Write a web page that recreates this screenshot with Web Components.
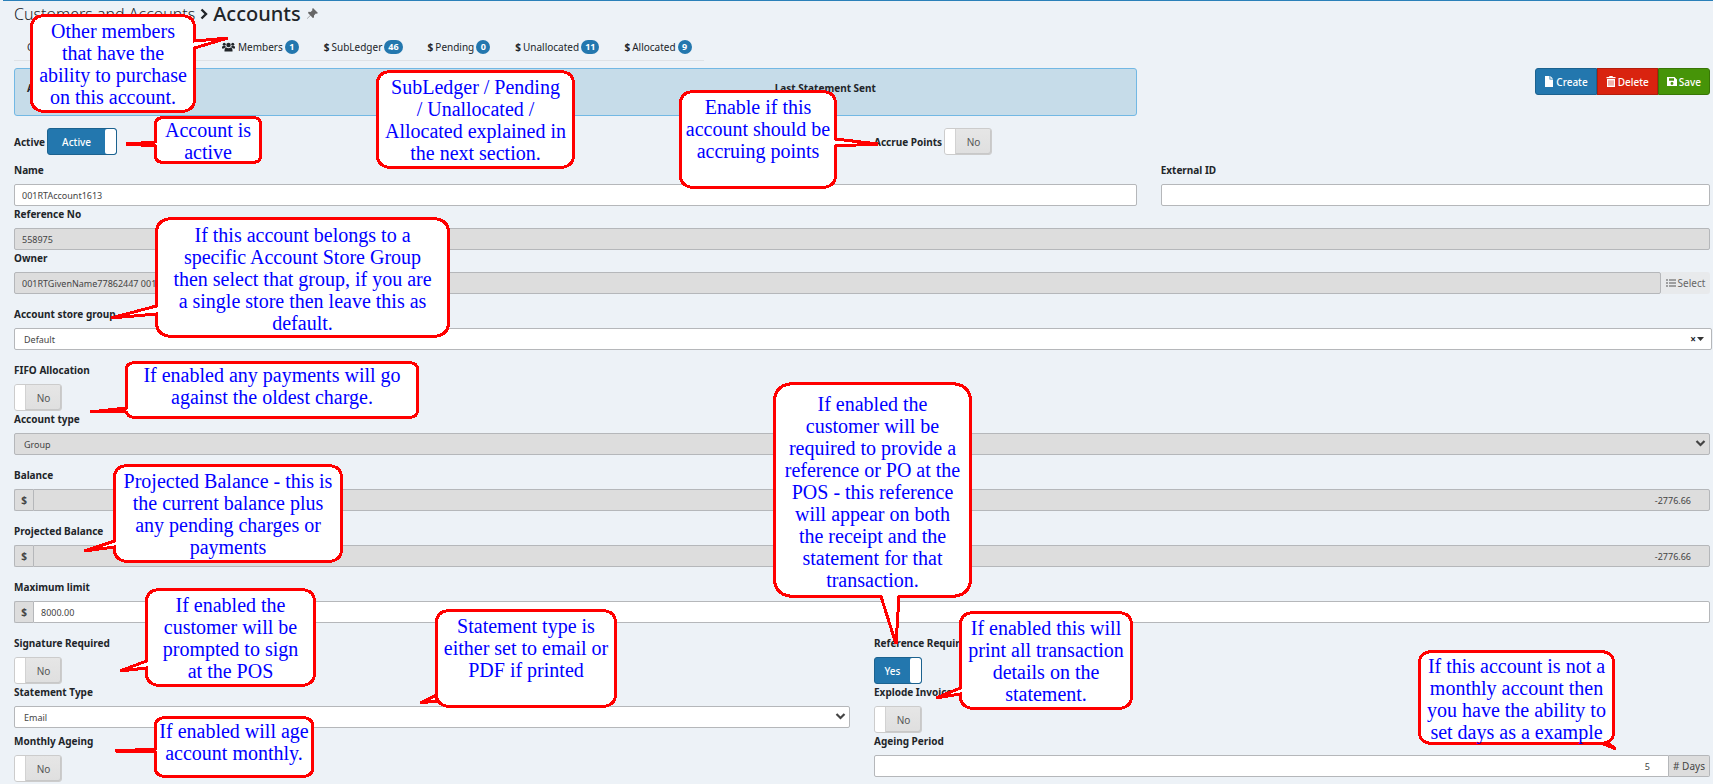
<!DOCTYPE html>
<html lang="en">
<head>
<meta charset="utf-8">
<title>Customers and Accounts</title>
<style>
html,body{margin:0;background:#edf2f7;color:#212529;font-family:"Noto Sans","Open Sans",sans-serif;font-size:9px}
body{position:relative;overflow:hidden}
</style>
</head>
<body>
<account-page></account-page>
<script>
const define=(name,html,setup)=>{
  const t=document.createElement('template');
  t.innerHTML='<style>*{box-sizing:border-box}button,input,select{font:inherit;color:inherit;margin:0}</style>'+html;
  customElements.define(name,class extends HTMLElement{
    connectedCallback(){
      if(this.shadowRoot)return;
      const r=this.attachShadow({mode:'open'});
      r.appendChild(t.content.cloneNode(true));
      if(setup)setup(this,r);
    }
  });
};
const fieldCss=`
:host{display:block;min-width:0}
label.name{display:block;height:22px;line-height:16px;font-weight:700;font-size:10px;white-space:nowrap}
.row{display:flex;height:22px}
.box{flex:1;min-width:0;width:100%;height:22px;border:1px solid #b5b7ba;border-radius:2px;background:#fff;color:#444;padding:0 7px;font-size:9px;outline:0}
.grey{background:#ddd}`;

define('text-field',`<style>${fieldCss}
.add{display:none;align-items:center;justify-content:center;background:#ddd;border:1px solid #b5b7ba;color:#444;font-size:10px}
:host([prefix]) .pre{display:flex;width:19px;border-right:0;border-radius:2px 0 0 2px;font-weight:700}
:host([suffix]) .post{display:flex;width:41px;border-left:0;border-radius:0 2px 2px 0}
:host([prefix]) .box{border-radius:0 2px 2px 0}
:host([suffix]) .box{border-radius:2px 0 0 2px}
:host([right]) .box{text-align:right;padding-right:18px}
</style><label class="name" for="i"></label><div class="row"><span class="add pre"></span><input class="box" id="i"><span class="add post"></span><slot></slot></div>`,(h,r)=>{
  r.querySelector('label').textContent=h.getAttribute('label');
  const i=r.querySelector('input');
  i.value=h.getAttribute('value')||'';
  if(h.hasAttribute('readonly')){i.readOnly=true;i.classList.add('grey')}
  r.querySelector('.pre').textContent=h.getAttribute('prefix')||'';
  r.querySelector('.post').textContent=h.getAttribute('suffix')||'';
});

define('select-field',`<style>${fieldCss}
.row{position:relative}
select.box{appearance:none;padding:0 9px;opacity:1}
.chev{position:absolute;right:4px;top:6px;width:11px;height:9px;pointer-events:none}
.caret{position:absolute;right:8px;top:9px;width:7px;height:4px;pointer-events:none}
.clear{position:absolute;right:16px;top:5px;border:0;padding:0;background:none;font-size:10px;font-weight:700;line-height:12px;display:none}
.caret{display:none}
:host([clearable]){margin-right:-2px}
:host([clearable]) .chev{display:none}
:host([clearable]) .caret,:host([clearable]) .clear{display:block}
</style><label class="name" for="s"></label><div class="row"><select class="box" id="s"><option></option></select>
<svg class="chev" viewBox="0 0 11 9"><path d="M1.5 2l4 4 4-4" fill="none" stroke="#444" stroke-width="2.2"/></svg>
<button class="clear" aria-label="Clear">×</button><svg class="caret" viewBox="0 0 7 4"><path d="M0 0h7L3.5 4z" fill="#333"/></svg></div>`,(h,r)=>{
  r.querySelector('label').textContent=h.getAttribute('label');
  r.querySelector('option').textContent=h.getAttribute('value');
  if(h.hasAttribute('disabled')){const s=r.querySelector('select');s.disabled=true;s.classList.add('grey')}
});

define('toggle-field',`<style>
:host{display:block}
.name{display:block;height:22px;line-height:16px;font-weight:700;font-size:10px;white-space:nowrap}
.sw{position:relative;display:flex;width:48px;height:27px;border:1px solid #ccc;border-radius:3px;background:linear-gradient(#e6e6e6,#dfdfdf);overflow:hidden;color:#555;font-size:10px;box-shadow:inset -1px -1px #c8c8c8}
.sw i{width:11px;background:#fff;border-right:1px solid #d2d2d2}
.sw span{flex:1;display:flex;align-items:center;justify-content:center}
input{position:absolute;inset:0;width:100%;height:100%;opacity:0}
:host([on]) .sw{background:#2377ae;border-color:#1c628f;color:#fff;flex-direction:row-reverse;font-weight:500;box-shadow:none}
:host([on]) .sw i{border:0;border-radius:2px}
:host([inline]){display:flex;align-items:center;gap:2px}
:host([inline]) .name{height:16px}
:host([wide]) .sw{width:70px}
</style><label class="name" for="c"></label><div class="sw"><i></i><span></span><input type="checkbox" id="c"></div>`,(h,r)=>{
  r.querySelector('label').textContent=h.getAttribute('label');
  r.querySelector('span').textContent=h.getAttribute('text');
  r.querySelector('input').checked=h.hasAttribute('on');
});

define('nav-tab',`<style>
:host{display:block}
a{display:flex;align-items:center;height:25px;padding:0 12px 0 13px;gap:2px;color:#212529;text-decoration:none;font-size:10px;white-space:nowrap}
b{background:#2377ae;color:#fff;border-radius:7px;height:14px;line-height:13px;min-width:14px;padding:0 4px;text-align:center;font-size:9px}
b:empty{display:none}
svg{width:13px;height:10px;margin-right:1px}
.d{font-weight:700;font-size:10px}
</style><a href="#"><span class="ic"></span><slot></slot><b></b></a>`,(h,r)=>{
  const ic=r.querySelector('.ic'),k=h.getAttribute('icon');
  if(k==='$'){ic.className='d';ic.textContent='$'}
  else if(k==='users'){ic.style.display='flex';ic.innerHTML='<svg viewBox="0 0 26 20" fill="#212529"><circle cx="13" cy="6" r="4.5"/><circle cx="4.5" cy="4.5" r="3"/><circle cx="21.5" cy="4.5" r="3"/><path d="M5 19v-3q0-4.5 4-5 4 3 8 0 4 .5 4 5v3zM0 12V10q0-2 3-2h3.5q1 2 2 2.5Q5 11 4 13H0zM26 12v-2q0-2-3-2h-3.5q-1 2-2 2.5 3.5.5 4.5 2.5h4z"/></svg>'}
  else ic.remove();
  r.querySelector('b').textContent=h.getAttribute('count')||'';
});

define('page-heading',`<style>
:host{display:block}
h1{margin:0;display:flex;align-items:center;height:25px;font-size:16px;font-weight:300;white-space:nowrap}
strong{font-weight:500;font-size:20px}
.c{width:8px;height:12px;margin:0 5px}
.p{width:11px;height:11px;margin-left:6px}
</style><h1><slot></slot><svg class="c" viewBox="0 0 8 12"><path d="M1.5 1.5L6 6l-4.5 4.5" fill="none" stroke="#212529" stroke-width="2.4"/></svg><strong><slot name="current"></slot></strong>
<svg class="p" viewBox="0 0 11 11"><path d="M6 0l5 5-1.2.8-1-.2L7 7.5 7 9.5 5.8 10 3.5 7.6.3 10.8 0 10.6 3.2 7.3 1 5l.6-1.2 2 .2L5.4 2.2 5.2 1z" fill="#666"/></svg></h1>`);

define('action-bar',`<style>
:host{display:flex;justify-content:flex-end;align-items:flex-start}
button{display:flex;align-items:center;justify-content:center;gap:2px;height:27px;border:1px solid;color:#fff;font-size:10px;font-weight:500;padding:0 8px;white-space:nowrap}
.a{background:#2377ae;border-color:#1c628f;border-radius:3px 0 0 3px}
.b{background:#d9230f;border-color:#b31d0c}
.c{background:#469408;border-color:#387606;border-radius:0 3px 3px 0}
svg{width:10px;height:11px;fill:#fff}
</style>
<button class="a"><svg viewBox="0 0 10 11"><path d="M1 0h4.5v3.5H9V11H1zM6.3 0L9 2.7H6.3z"/></svg>Create</button>
<button class="b"><svg viewBox="0 0 10 11"><path d="M3.5 0h3l.5 1h2.5v1.3h-9V1H3zM1 3h8v8H1z"/><path d="M3 4.3v5.4M5 4.3v5.4M7 4.3v5.4" stroke="#d9230f" stroke-width=".7"/></svg>Delete</button>
<button class="c"><svg viewBox="0 0 10 11"><path fill-rule="evenodd" d="M0 1h7.5L10 3.5V10H0zM2 2.3v2.4h5V2.3zM5 6a1.4 1.4 0 100 2.9A1.4 1.4 0 005 6z"/></svg>Save</button>`);

define('pick-button',`<style>
:host{display:block}
button{display:flex;align-items:center;justify-content:center;gap:2px;width:49px;height:22px;border:0;border-radius:0 3px 3px 0;background:#e8eaec;color:#666;font-size:10px;padding:0}
svg{width:10px;height:8px}
</style><button><svg viewBox="0 0 10 8"><path d="M0 1h2M3 1h7M0 4h2M3 4h7M0 7h2M3 7h7" stroke="#555"/></svg><slot></slot></button>`);

/* Speech bubble: box is "left,top,width,height,corner radius,text inset"; tail is "side,start,end,tipX,tipY". */
define('call-out',`<style>
:host{position:absolute;display:block;color:#00f;font-family:"Liberation Serif",serif;font-size:20px;line-height:22px;text-align:center;white-space:nowrap}
svg{position:absolute;inset:0;width:100%;height:100%;overflow:visible}
div{position:relative;display:flex;flex-direction:column;align-items:center}
p{margin:0}
</style><svg><path fill="#fff" stroke="#f00" stroke-width="3" shape-rendering="crispEdges"/></svg><div><p><slot></slot></p></div>`,(h,r)=>{
  const [x,y,w,ht,rad,pad]=h.getAttribute('box').split(',').map(Number);
  h.style.cssText=`left:${x}px;top:${y}px;width:${w}px;height:${ht}px`;
  r.querySelector('div').style.paddingTop=pad+'px';
  const a=1.5,R=w-a,B=ht-a,t=(h.getAttribute('tail')||'').split(',');
  const s=+t[1],e=+t[2],tx=+t[3],ty=+t[4];
  const seg=k=>t[0]===k;
  const rx=rad+3;
  r.querySelector('path').setAttribute('d',
   `M${a+rx} ${a}H${R-rx}Q${R} ${a} ${R} ${a+rad}`+
   (seg('r')?`V${s}L${tx} ${ty}L${R} ${e}`:'')+`V${B-rad}Q${R} ${B} ${R-rx} ${B}`+
   (seg('b')?`H${e}L${tx} ${ty}L${s} ${B}`:'')+`H${a+rx}Q${a} ${B} ${a} ${B-rad}`+
   (seg('l')?`V${e}L${tx} ${ty}L${a} ${s}`:'')+`V${a+rad}Q${a} ${a} ${a+rx} ${a}Z`);
});

define('account-page',`<style>
:host{display:block;position:relative;padding:0 3px 2px 14px}
.line{height:1px;background:#2a80b9;margin:0 -3px 0 -11px}
nav{display:flex;width:fit-content;margin-top:8px;height:27px;border-bottom:1px solid #dee2e6}
nav .first{width:195px}
.grid{display:grid;grid-template-columns:repeat(12,minmax(0,1fr));column-gap:24px}
.s12{grid-column:span 12}.s8{grid-column:span 8}.s6{grid-column:span 6}.s4{grid-column:span 4}
.panel{display:grid;grid-template-columns:15fr 7fr;height:48px;border:1px solid #72b8e4;border-radius:3px;background:#c6dce9;padding:11px 12px;font-size:10px;line-height:16px;font-weight:700}
.top{margin-top:7px}
.mid{margin:12px 0 7px}
.gap{margin-top:12px}
.half{height:49px}
</style>
<div class="line"></div>
<page-heading>Customers and Accounts<span slot="current">Accounts</span></page-heading>
<nav><nav-tab class="first">General</nav-tab><nav-tab icon="users" count="1">Members</nav-tab><nav-tab icon="$" count="46">SubLedger</nav-tab><nav-tab icon="$" count="0">Pending</nav-tab><nav-tab icon="$" count="11">Unallocated</nav-tab><nav-tab icon="$" count="9">Allocated</nav-tab></nav>
<div class="grid top"><div class="panel s8"><span>Account</span><span>Last Statement Sent</span></div><action-bar class="s4"></action-bar></div>
<div class="grid mid"><toggle-field class="s6" label="Active" text="Active" on inline wide></toggle-field><toggle-field class="s6" label="Accrue Points" text="No" inline></toggle-field></div>
<div class="grid">
<text-field class="s8" label="Name" value="001RTAccount1613"></text-field><text-field class="s4" label="External ID"></text-field>
<text-field class="s12" label="Reference No" value="558975" readonly></text-field>
<text-field class="s12" label="Owner" value="001RTGivenName77862447 001RTSurname" readonly><pick-button>Select</pick-button></text-field>
<select-field class="s12 gap" label="Account store group" value="Default" clearable></select-field>
<toggle-field class="s12 gap" label="FIFO Allocation" text="No"></toggle-field>
<select-field class="s12" label="Account type" value="Group" disabled></select-field>
<text-field class="s12 gap" label="Balance" value="-2776.66" prefix="$" readonly right></text-field>
<text-field class="s12 gap" label="Projected Balance" value="-2776.66" prefix="$" readonly right></text-field>
<text-field class="s12 gap" label="Maximum limit" value="8000.00" prefix="$"></text-field>
<toggle-field class="s6 gap" label="Signature Required" text="No"></toggle-field><toggle-field class="s6 gap" label="Reference Required" text="Yes" on></toggle-field>
<select-field class="s6 half" label="Statement Type" value="Email"></select-field><toggle-field class="s6 half" label="Explode Invoice" text="No"></toggle-field>
<toggle-field class="s6" label="Monthly Ageing" text="No"></toggle-field><text-field class="s6" label="Ageing Period" value="5" suffix="# Days" right></text-field>
</div>
<call-out box="30,14,166,99,12,6" tail="r,27,34,198,24">Other members<br>that have the<br>ability to purchase<br>on this account.</call-out>
<call-out box="154,116,108,48,6,3" tail="l,26,30,-28,28">Account is<br>active</call-out>
<call-out box="376,70,199,99,12,6">SubLedger / Pending<br>/ Unallocated /<br>Allocated explained in<br>the next section.</call-out>
<call-out box="679,90,158,99,12,6" tail="r,49,56,199,54">Enable if this<br>account should be<br>accruing points</call-out>
<call-out box="155,217,295,121,14,7" tail="l,89,97,-44,101">If this account belongs to a<br>specific Account Store Group<br>then select that group, if you are<br>a single store then leave this as<br>default.</call-out>
<call-out box="125,361,294,58,7,3" tail="l,47,50,-35,51">If enabled any payments will go<br>against the oldest charge.</call-out>
<call-out box="113,464,230,99,12,6" tail="l,77,83,-29,87">Projected Balance - this is<br>the current balance plus<br>any pending charges or<br>payments</call-out>
<call-out box="145,588,171,99,12,6" tail="l,73,80,-25,83">If enabled the<br>customer will be<br>prompted to sign<br>at the POS</call-out>
<call-out box="154,716,160,62,8,4" tail="l,33,36,-39,35">If enabled will age<br>account monthly.</call-out>
<call-out box="435,609,182,99,12,6" tail="l,86,92,-15,94">Statement type is<br>either set to email or<br>PDF if printed</call-out>
<call-out box="773,382,199,216,18,11" tail="b,108,126,123,262">If enabled the<br>customer will be<br>required to provide a<br>reference or PO at the<br>POS - this reference<br>will appear on both<br>the receipt and the<br>statement for that<br>transaction.</call-out>
<call-out box="959,611,174,99,12,6" tail="l,77,83,-23,87">If enabled this will<br>print all transaction<br>details on the<br>statement.</call-out>
<call-out box="1418,650,197,95,11,5" tail="b,184,190,198,99">If this account is not a<br>monthly account then<br>you have the ability to<br>set days as a example</call-out>`);
</script>
</body>
</html>
